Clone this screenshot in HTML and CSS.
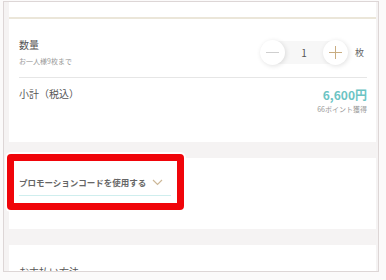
FILE: index.html
```html
<!DOCTYPE html>
<html lang="ja">
<head>
  <meta charset="UTF-8" />
  <title>カート</title>
  <link rel="stylesheet" href="styles.css">
</head>
<body>
  <div id="frame">
    <div class="card card-order">
      <div class="section-line"></div>
      <div class="row row-qty">
        <div class="label-block">
          <div class="label">数量</div>
          <div class="note">お一人様9枚まで</div>
        </div>
        <div class="stepper">
          <div class="stepper-track">
            <button class="step-btn minus"><span class="bar"></span></button>
            <span class="qty">1</span>
            <button class="step-btn plus"><span class="bar"></span><span class="bar bar-v"></span></button>
          </div>
          <span class="unit">枚</span>
        </div>
      </div>
      <div class="divider"></div>
      <div class="row row-total">
        <div class="label">小計（税込）</div>
        <div class="price-block">
          <div class="price">6,600円</div>
          <div class="note">66ポイント獲得</div>
        </div>
      </div>
    </div>

    <div class="card card-promo">
      <div class="promo-toggle">
        <span>プロモーションコードを使用する</span>
        <svg class="chevron" width="11" height="7" viewBox="0 0 11 7"><path d="M1 1l4.5 4.5L10 1" fill="none" stroke="#cdb898" stroke-width="1.2"/></svg>
      </div>
      <div class="highlight"></div>
    </div>

    <div class="card card-pay">
      <div class="label">お支払い方法</div>
    </div>
  </div>
</body>
</html>
```

FILE: styles.css
```css
body {
  margin: 0;
  font-family: "Noto Sans CJK JP", "Noto Sans", sans-serif;
  background: #fbfafa;
  color: #555;
}

#frame {
  margin: 1px 0 0 3px;
  width: 367px;
  height: 269px;
  padding: 0 2px 0 5px;
  border: 1px solid #ddd6d6;
  background: #f5f3f3;
  overflow: hidden;
  display: flex;
  flex-direction: column;
  gap: 16px;
}

.card {
  background: #fff;
  padding: 0 9px 0 10px;
  position: relative;
  flex-shrink: 0;
}

.card-order {
  height: 140px;
  padding-top: 15px;
  box-sizing: border-box;
}

.section-line {
  height: 2px;
  background: #ebe6d9;
  margin: 0 -9px 0 -10px;
}

.row {
  display: flex;
  justify-content: space-between;
}

.row-qty {
  align-items: center;
  padding: 19px 3px 11px 0;
}

.label {
  font-size: 10px;
  line-height: 14px;
  color: #555;
}

.note {
  font-size: 7px;
  line-height: 10px;
  color: #999;
  margin-top: 4px;
}

.stepper {
  display: flex;
  align-items: center;
  gap: 7px;
}

.stepper-track {
  display: flex;
  align-items: center;
  background: #f7f7f7;
  height: 23px;
  border-radius: 12px;
}

.step-btn {
  width: 25px;
  height: 25px;
  border-radius: 50%;
  border: none;
  background: #fff;
  box-shadow: 1px 1px 5px rgba(0, 0, 0, 0.12);
  position: relative;
  padding: 0;
}

.step-btn .bar {
  position: absolute;
  left: 6px;
  top: 12px;
  width: 13px;
  height: 1px;
  background: #cfcfcf;
}

.step-btn.plus .bar {
  background: #c9ad82;
  height: 1.5px;
}

.step-btn.plus .bar-v {
  left: 12px;
  top: 6px;
  width: 1.5px;
  height: 13px;
}

.qty {
  width: 38px;
  text-align: center;
  font-size: 10px;
  color: #555;
}

.unit {
  font-size: 9px;
  color: #666;
}

.divider {
  height: 1px;
  background: #e6e6e6;
}

.row-total {
  padding-top: 9px;
}

.price-block {
  text-align: right;
}

.price {
  font-size: 12px;
  line-height: 16px;
  font-weight: bold;
  color: #6cc4c4;
}

.price-block .note {
  margin-top: 1px;
}

.card-promo {
  height: 71px;
  box-sizing: border-box;
  padding-top: 18px;
}

.promo-toggle {
  display: flex;
  align-items: center;
  gap: 6px;
  width: 152px;
  line-height: 12px;
  padding-bottom: 7px;
  border-bottom: 1px solid #cfeeee;
  font-size: 8.5px;
  font-weight: bold;
  color: #666;
}

.highlight {
  position: absolute;
  left: -2px;
  top: -4px;
  width: 163px;
  height: 42px;
  border: 7px solid #f0050a;
  border-radius: 4px;
  box-shadow: 0 0 0 2px #fff;
}

.card-pay {
  height: 40px;
  padding-top: 20px;
}
```
